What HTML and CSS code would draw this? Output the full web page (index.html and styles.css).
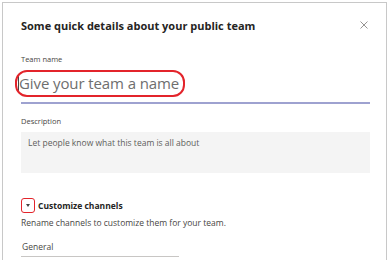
FILE: index.html
```html
<!DOCTYPE html>
<html lang="en">
<head>
    <meta charset="UTF-8">
    <meta name="viewport" content="width=device-width, initial-scale=1.0">
    <title>Create a team</title>
    <link rel="stylesheet" href="styles.css">
</head>
<body>
    <div class="dialog">
        <div class="dialog-header">
            <h1>Some quick details about your public team</h1>
            <svg class="close" width="8" height="8" viewBox="0 0 8 8">
                <path d="M0.5 0.5 L7.5 7.5 M7.5 0.5 L0.5 7.5" stroke="#8a8886" stroke-width="0.9" fill="none"/>
            </svg>
        </div>

        <div class="field">
            <label class="field-label" for="teamName">Team name</label>
            <div class="name-input">
                <span class="highlight"><span class="cursor"></span>Give your team a name</span>
            </div>
        </div>

        <div class="field field-desc">
            <label class="field-label" for="description">Description</label>
            <div class="desc-box">Let people know what this team is all about</div>
        </div>

        <div class="channels">
            <div class="channels-title">
                <span class="caret-box"><span class="caret"></span></span>
                <span>Customize channels</span>
            </div>
            <p class="channels-hint">Rename channels to customize them for your team.</p>
            <div class="channel-input">General</div>
        </div>
    </div>
</body>
</html>
```

FILE: styles.css
```css
body {
    margin: 0;
    padding: 2px 3px 0 2px;
    font-family: 'Open Sans', 'Noto Sans', sans-serif;
    background: white;
    overflow: hidden;
}

.dialog {
    border: 1px solid #c8c8c8;
    border-bottom: none;
    height: 270px;
    padding: 0 16px 0 18px;
    box-sizing: border-box;
}

.dialog-header {
    display: flex;
    justify-content: space-between;
    align-items: center;
    height: 44px;
}

.dialog-header h1 {
    margin: 0;
    font-size: 11px;
    font-weight: 700;
    color: #252423;
}

.close {
    margin-right: 2px;
}

.field-label {
    display: block;
    font-size: 7.5px;
    color: #484644;
    margin-top: 7px;
}

.field-desc .field-label {
    margin-top: 12px;
}

.name-input {
    border-bottom: 2px solid #9ea2d0;
    height: 38px;
    display: flex;
    align-items: center;
}

.highlight {
    position: relative;
    font-size: 15px;
    letter-spacing: -0.1px;
    color: #6e6e6e;
    outline: 2px solid #e3242b;
    border-radius: 10px;
    padding: 0 4px 0 1px;
    margin-left: -4px;
    line-height: 23px;
}

.cursor {
    display: inline-block;
    width: 1px;
    height: 17px;
    background: #444;
    vertical-align: middle;
}

.desc-box {
    background: #f4f4f4;
    height: 41px;
    margin-top: 6px;
    padding: 5px 7px;
    box-sizing: border-box;
    font-size: 8.5px;
    color: #605e5c;
}

.channels {
    margin-top: 25px;
}

.channels-title {
    display: flex;
    align-items: center;
    gap: 3px;
    font-size: 8.5px;
    font-weight: 700;
    color: #252423;
}

.caret-box {
    width: 12px;
    height: 13px;
    border: 1.5px solid #e3242b;
    border-radius: 3px;
    display: flex;
    align-items: center;
    justify-content: center;
}

.caret {
    width: 0;
    height: 0;
    border-left: 2.5px solid transparent;
    border-right: 2.5px solid transparent;
    border-top: 3px solid #444;
}

.channels-hint {
    margin: 4px 0 0;
    font-size: 8.5px;
    color: #484644;
}

.channel-input {
    width: 156px;
    border-bottom: 1px solid #c8c6c4;
    margin-top: 10px;
    padding: 3px 1px 4px;
    font-size: 8.5px;
    color: #484644;
}
```
